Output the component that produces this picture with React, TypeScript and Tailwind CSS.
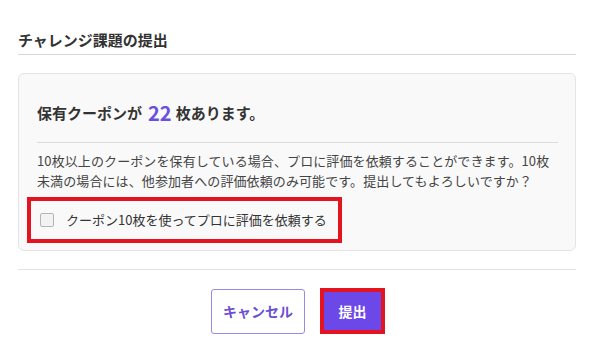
import React from "react";

export default function App() {
  const font = { fontFamily: '"Noto Sans CJK JP", "Noto Sans", sans-serif' };
  return (
    <div className="w-[593px] h-[358px] bg-white px-[18px] pt-[30px] text-[#333]" style={font}>
      <div className="text-[15px] font-bold leading-[20px] pb-[4px] border-b border-[#d6d6d6] w-[558px]">
        チャレンジ課題の提出
      </div>
      <div className="mt-[18px] w-[558px] rounded-[6px] border border-[#e4e4e4] bg-[#f9f9f9] pl-[18px] pr-[17px] pt-[25px] pb-[7px]">
        <div className="flex items-end pb-[15px] border-b border-[#dcdcdc] text-[15px] font-bold leading-[28px] text-[#333]">
          <span>保有クーポンが</span>
          <span className="ml-[6px] mr-[4px] text-[20px] text-[#6a4fe0] leading-[28px]">22</span>
          <span>枚あります。</span>
        </div>
        <p className="mt-[8px] text-[13px] leading-[20px] text-[#444] tracking-[0.1px]">
          10枚以上のクーポンを保有している場合、プロに評価を依頼することができます。10枚未満の場合には、他参加者への評価依頼のみ可能です。提出してもよろしいですか？
        </p>
        <label className="mt-[6px] -ml-[10px] flex items-center h-[46px] w-[315px] border-4 border-[#e3141f] pl-[9px]">
          <span className="w-[14px] h-[14px] rounded-[2px] border border-[#b5b5b5] bg-[#f2f2f2]" />
          <span className="ml-[12px] text-[13px] text-[#333]">クーポン10枚を使ってプロに評価を依頼する</span>
        </label>
      </div>
      <div className="mt-[18px] w-[558px] border-t border-[#e2e2e2] flex justify-center pt-[18px]">
        <div className="flex items-center gap-[15px] ml-[2px]">
          <button className="w-[94px] h-[45px] rounded-[3px] border border-[#9a8ae6] bg-white text-[14px] font-bold text-[#6a4fd6]">
            キャンセル
          </button>
          <div className="border-[4px] border-[#e3141f] p-0">
            <button className="w-[57px] h-[38px] bg-[#6c48e8] text-white text-[14px] font-bold">
              提出
            </button>
          </div>
        </div>
      </div>
    </div>
  );
}
